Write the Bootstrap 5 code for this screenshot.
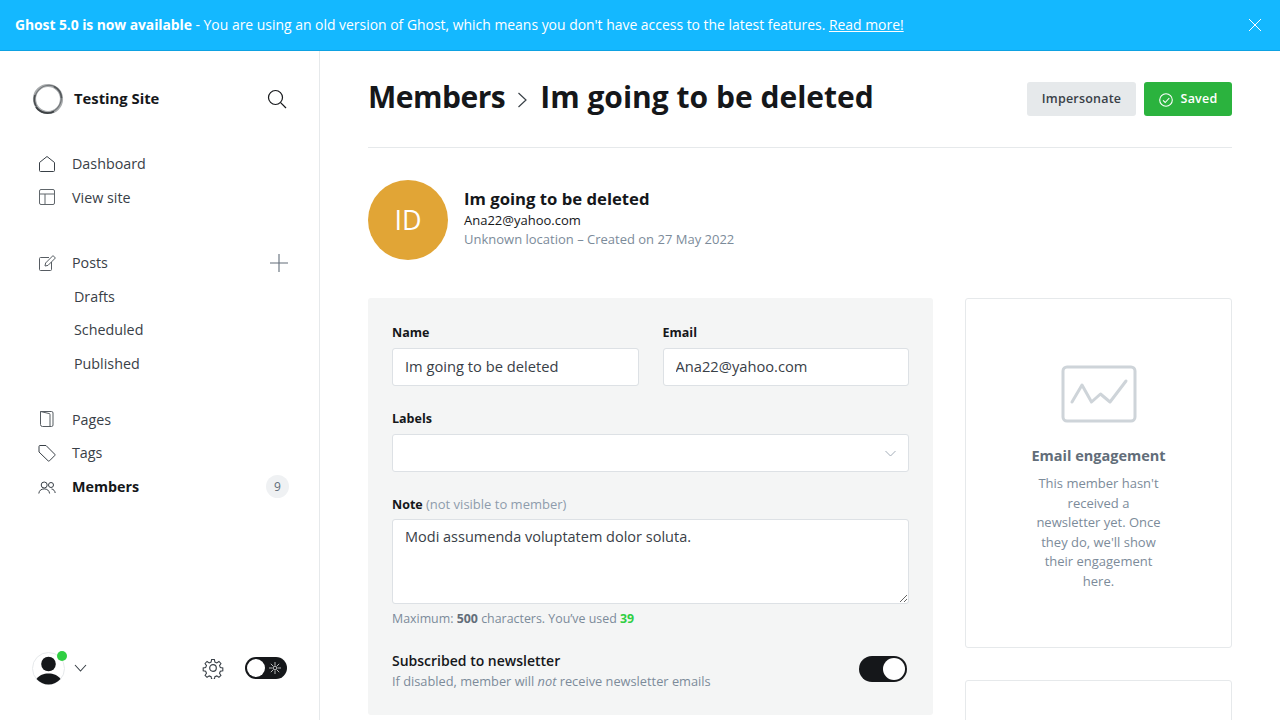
<!DOCTYPE html>
<html lang="en">
<head>
  <meta charset="UTF-8" />
  <title>Members - Testing Site</title>
  <link href="https://cdn.jsdelivr.net/npm/bootstrap@5.3.0/dist/css/bootstrap.min.css" rel="stylesheet">
  <style>
    html, body { height: 100%; overflow: hidden; }
    body { font-family: "Open Sans", "Noto Sans", sans-serif; color: #15171a; font-size: 14px; }
    svg { display: block; flex: none; }

    .update-bar { height: 51px; background: #14b8ff; border-bottom: 1px solid #0ea2e2; color: #fff; padding: 0 18px 0 15px; font-size: 13.93px; }
    .update-bar strong { letter-spacing: -.08px; }
    .update-bar a { color: #fff; }
    .shell { height: 669px; }

    .side-col { width: 320px; flex: none; border-right: 1px solid #e6e9eb; padding: 32px 30px 0 32px; }
    .brand-row { height: 32px; margin-bottom: 32px; }
    .brand-name { font-weight: 700; font-size: 14.8px; margin-left: 10px; padding-bottom: 2px; }
    .menu-list { list-style: none; margin: 0 0 32px; padding: 0; }
    .menu-list.menu-posts { margin-bottom: 22px; }
    .menu-item { height: 33.6px; color: #394047; font-size: 14.3px; padding-left: 6px; }
    .menu-item svg.ico { margin-right: 16px; color: #394047; }
    .menu-sub { padding-left: 42px; }
    .menu-on { color: #15171a; font-weight: 700; }
    .count-pill { width: 23px; height: 23px; border-radius: 50%; background: #eff1f3; color: #626d79; font-size: 12px; }
    .search-ico { margin-right: 2px; }
    .plus-ico { margin-right: 1px; }
    .side-foot { margin-top: auto; height: 34px; margin-bottom: 35px; padding-right: 2px; }
    .avatar-wrap { width: 34px; height: 34px; position: relative; }
    .online-dot { position: absolute; top: 0; right: -1px; width: 10px; height: 10px; border-radius: 50%; background: #30cf43; }
    .night-toggle { width: 42px; height: 22px; border-radius: 11px; background: #15171a; padding: 2px; margin-left: 21px; }
    .night-knob { width: 18px; height: 18px; border-radius: 50%; background: #fff; }

    .main-col { padding: 30px 48px 0; min-width: 0; overflow: hidden; }
    .head-row { height: 67px; border-bottom: 1px solid #e6e9eb; margin-bottom: 32px; align-items: flex-start; }
    .page-title { font-size: 30px; font-weight: 700; line-height: 32px; margin: 0; color: #15171a; }
    .title-first { letter-spacing: -.5px; }
    .title-chev { margin: 6px 11px 0 12px; }
    .head-btns { margin-top: 1px; }
    .btn-ghostish { height: 34px; width: 109px; padding: 1px 0 0; background: #e6e9eb; color: #394047; font-size: 12.5px; font-weight: 600; letter-spacing: .2px; border: 0; border-radius: 3px; }
    .btn-saved { height: 34px; width: 88px; padding: 1px 0 0; background: #2bb33e; color: #fff; font-size: 12.5px; font-weight: 600; letter-spacing: .2px; border: 0; border-radius: 3px; }
    .member-pic { width: 80px; height: 80px; border-radius: 50%; background: #e1a536; color: #fff; font-size: 27px; margin-right: 16px; }
    .member-info { margin-top: -3px; }
    .member-name { font-size: 16.7px; font-weight: 700; line-height: 21px; margin-bottom: 2px; }
    .member-mail { font-size: 13px; line-height: 19px; color: #15171a; }
    .member-meta { font-size: 13px; line-height: 19px; color: #7c8b9a; }

    .body-row { margin-top: 38px; gap: 32px; }
    .form-panel { width: 565px; flex: none; height: 417px; background: #f4f5f5; border-radius: 3px; padding: 26px 24px 0; }
    .fld-label { font-size: 12.5px; font-weight: 700; color: #15171a; line-height: 18px; margin-bottom: 6px; display: block; }
    .fld-label.note-label { margin-bottom: 5px; }
    .fld-hint { font-weight: 400; color: #8e9cac; font-size: 13px; }
    .fld-gap { margin-bottom: 23px; }
    .fld-gap-top { margin-bottom: 24px; }
    .form-control.fld-input, .form-select.fld-input { height: 38px; font-size: 14.7px; color: #394047; border: 1px solid #dde1e5; border-radius: 3px; padding: 0 12px 3px; box-shadow: none; }
    .form-select.fld-input { background-image: url("data:image/svg+xml,%3csvg xmlns='http://www.w3.org/2000/svg' viewBox='0 0 11 7'%3e%3cpath fill='none' stroke='%23a3adb8' d='M.5 1l5 5 5-5'/%3e%3c/svg%3e"); background-size: 11px 7px; background-position: right 12px center; }
    .form-control.fld-area { height: 85px; font-size: 14.5px; color: #394047; border: 1px solid #dde1e5; border-radius: 3px; padding: 6px 12px; line-height: 22px; }
    .fld-note { font-size: 12.4px; color: #7c8b9a; margin-top: 6px; line-height: 18px; }
    .fld-note b { color: #626d79; }
    .fld-note .used { color: #30cf43; }
    .news-row { margin-top: 23px; }
    .news-title { font-size: 14px; font-weight: 600; line-height: 20px; }
    .news-sub { font-size: 12.8px; color: #7c8b9a; line-height: 20px; }
    .news-toggle { width: 48px; height: 26px; border-radius: 13px; background: #15171a; padding: 2px; margin: 0 2px 5px 0; }
    .news-knob { width: 22px; height: 22px; border-radius: 50%; background: #fff; }

    .stat-col { width: 267px; flex: none; }
    .card.engage-box { height: 350px; border: 1px solid #e6e9eb; border-radius: 3px; padding-top: 66px; }
    .engage-title { font-size: 14.5px; font-weight: 700; color: #626d79; margin-top: 23px; line-height: 20px; }
    .engage-text { font-size: 13px; color: #7c8b9a; line-height: 19.6px; margin-top: 8px; }
    .card.next-box { height: 100px; border: 1px solid #e6e9eb; border-radius: 3px; margin-top: 32px; }
  </style>
</head>
<body>

  <!-- Update banner -->
  <div class="update-bar d-flex align-items-center justify-content-between">
    <div><strong>Ghost 5.0 is now available</strong> - You are using an old version of Ghost, which means you don't have access to the latest features. <a href="#">Read more!</a></div>
    <svg width="14" height="14" viewBox="0 0 14 14" stroke="#fff" stroke-width="1"><path d="M1 1l12 12M13 1L1 13"/></svg>
  </div>

  <div class="shell d-flex">
    <!-- Sidebar -->
    <aside class="side-col d-flex flex-column">
      <div class="brand-row d-flex align-items-center">
        <svg width="32" height="32" viewBox="0 0 32 32" fill="none">
          <circle cx="16" cy="16" r="13.500" stroke="#a9acae" stroke-width="3.200"/>
          <ellipse cx="16" cy="16" rx="13" ry="14" stroke="#6d7174" stroke-width="1" transform="rotate(35 16 16)"/>
          <path d="M4 24A14 14 0 0 0 22 28.500" stroke="#3d4144" stroke-width="1.800"/>
          <path d="M3 12A14 14 0 0 0 4 23" stroke="#4a4e51" stroke-width="1.500"/>
          <path d="M22 3.500A14 14 0 0 1 29.500 15" stroke="#55595c" stroke-width="1.600"/>
        </svg>
        <span class="brand-name">Testing Site</span>
        <svg class="ms-auto search-ico" width="20" height="20" viewBox="0 0 20 20" fill="none" stroke="#15171a" stroke-width="1.200"><circle cx="8.500" cy="8.500" r="7"/><path d="M13.600 13.600L19 19"/></svg>
      </div>

      <ul class="menu-list">
        <li class="menu-item d-flex align-items-center">
          <svg class="ico" width="18" height="18" viewBox="0 0 18 18" fill="none" stroke="currentColor"><path d="M1.500 7.500L9 1.500l7.500 6v8a1 1 0 0 1-1 1h-13a1 1 0 0 1-1-1z"/></svg>Dashboard
        </li>
        <li class="menu-item d-flex align-items-center">
          <svg class="ico" width="18" height="18" viewBox="0 0 18 18" fill="none" stroke="currentColor" opacity=".8"><rect x="1.500" y="1.500" width="15" height="15" rx="1.500"/><path d="M1.500 6h15M7 6v10.500"/></svg>View site
        </li>
      </ul>

      <ul class="menu-list menu-posts">
        <li class="menu-item d-flex align-items-center">
          <svg class="ico" width="18" height="18" viewBox="0 0 18 18" fill="none" stroke="currentColor" opacity=".85"><path d="M11 3.500H2.500a1 1 0 0 0-1 1v11a1 1 0 0 0 1 1h10a1 1 0 0 0 1-1V8"/><path d="M7 12l.6-3 7.400-7.400 2.400 2.400L10 11.400z"/></svg>Posts
          <svg class="ms-auto plus-ico" width="18" height="18" viewBox="0 0 18 18" stroke="#626d79" stroke-width="1.100"><path d="M9 0v18M0 9h18"/></svg>
        </li>
        <li class="menu-item menu-sub d-flex align-items-center">Drafts</li>
        <li class="menu-item menu-sub d-flex align-items-center">Scheduled</li>
        <li class="menu-item menu-sub d-flex align-items-center">Published</li>
      </ul>

      <ul class="menu-list">
        <li class="menu-item d-flex align-items-center">
          <svg class="ico" width="18" height="18" viewBox="0 0 18 18" fill="none" stroke="currentColor" opacity=".85"><path d="M2.500 1.500h11a1.500 1.500 0 0 1 1.500 1.500v12a1.500 1.500 0 0 1-1.500 1.500h-9a2 2 0 0 1-2-2z"/><path d="M2.500 1.500l8.500 2a1 1 0 0 1 1 1v12"/></svg>Pages
        </li>
        <li class="menu-item d-flex align-items-center">
          <svg class="ico" width="18" height="18" viewBox="0 0 18 18" fill="none" stroke="currentColor"><path d="M1 2.500a1 1 0 0 1 1-1h6l8.700 8.700a1 1 0 0 1 0 1.400l-5.200 5.200a1 1 0 0 1-1.400 0L1 8z"/></svg>Tags
        </li>
        <li class="menu-item menu-on d-flex align-items-center">
          <svg class="ico" width="18" height="18" viewBox="0 0 18 18" fill="none" stroke="currentColor"><circle cx="6.200" cy="7" r="3"/><path d="M.8 15.500c.3-3 2.500-4.600 5.400-4.600s5 1.600 5.400 4.600"/><circle cx="13" cy="7" r="2.500"/><path d="M13.500 11c2 .2 3.400 1.800 3.700 4"/></svg>Members
          <span class="count-pill ms-auto d-flex align-items-center justify-content-center fw-normal">9</span>
        </li>
      </ul>

      <div class="side-foot d-flex align-items-center">
        <div class="avatar-wrap">
          <svg width="34" height="34" viewBox="0 0 34 34">
            <circle cx="16.500" cy="17.500" r="16" fill="#fff" stroke="#e6e9eb"/>
            <circle cx="16.500" cy="13" r="7.300" fill="#15171a"/>
            <path d="M4.500 28c3-4 7-5.500 12-5.500s9 1.500 12 5.500c-3 3.500-7.500 5.500-12 5.500S7.500 31.500 4.500 28z" fill="#15171a"/>
          </svg>
          <span class="online-dot"></span>
        </div>
        <svg class="ms-2" width="13" height="8" viewBox="0 0 13 8" fill="none" stroke="#394047" stroke-width="1.100"><path d="M1 1l5.500 6L12 1"/></svg>
        <svg class="ms-auto" width="22" height="22" viewBox="0 0 24 24" fill="none" stroke="#394047" stroke-width="1.300"><circle cx="12" cy="12" r="3.600"/><path d="M10.300 1.800h3.400l.6 3 2.300 1 2.600-1.700 2.400 2.400-1.700 2.600 1 2.300 3 .6v3.400l-3 .6-1 2.300 1.700 2.600-2.400 2.400-2.600-1.700-2.300 1-.6 3h-3.400l-.6-3-2.300-1-2.600 1.700-2.400-2.400 1.700-2.600-1-2.300-3-.6v-3.400l3-.6 1-2.300-1.700-2.600 2.400-2.400 2.600 1.700 2.300-1z" transform="translate(1.200 1.200) scale(.9)"/></svg>
        <div class="night-toggle d-flex align-items-center justify-content-between">
          <span class="night-knob"></span>
          <svg class="me-1" width="12" height="12" viewBox="0 0 12 12" stroke="#fff" stroke-width=".7" fill="#fff"><circle cx="6" cy="6" r="1.800" fill="none"/><path d="M6 0v3.500M6 8.500V12M0 6h3.500M8.500 6H12M1.800 1.800l2.400 2.400M7.800 7.800l2.400 2.400M10.200 1.800L7.800 4.200M4.200 7.800l-2.400 2.400"/></svg>
        </div>
      </div>
    </aside>

    <!-- Main -->
    <main class="main-col flex-grow-1">
      <div class="head-row d-flex justify-content-between">
        <h1 class="page-title d-flex align-items-center">
          <span class="title-first">Members</span>
          <svg class="title-chev" width="12" height="18" viewBox="0 0 12 18" fill="none" stroke="#394047" stroke-width="1.200"><path d="M1.500 2l7.500 7-7.500 7"/></svg>
          <span>Im going to be deleted</span>
        </h1>
        <div class="d-flex gap-2 head-btns">
          <button class="btn btn-ghostish" type="button">Impersonate</button>
          <button class="btn btn-saved d-flex align-items-center justify-content-center" type="button">
            <svg class="me-2" width="14" height="14" viewBox="0 0 14 14" fill="none" stroke="#fff" stroke-width="1.100"><circle cx="7" cy="7" r="6.300"/><path d="M4 7.300l2.200 2.200L10.300 5"/></svg>Saved
          </button>
        </div>
      </div>

      <div class="d-flex align-items-center">
        <div class="member-pic d-flex align-items-center justify-content-center">ID</div>
        <div class="member-info">
          <div class="member-name">Im going to be deleted</div>
          <div class="member-mail">Ana22@yahoo.com</div>
          <div class="member-meta">Unknown location – Created on 27 May 2022</div>
        </div>
      </div>

      <div class="body-row d-flex align-items-start">
        <form class="form-panel">
          <div class="row gx-4 fld-gap-top">
            <div class="col-6">
              <label class="fld-label">Name</label>
              <input class="form-control fld-input" value="Im going to be deleted">
            </div>
            <div class="col-6">
              <label class="fld-label">Email</label>
              <input class="form-control fld-input" value="Ana22@yahoo.com">
            </div>
          </div>
          <div class="fld-gap">
            <label class="fld-label">Labels</label>
            <select class="form-select fld-input"></select>
          </div>
          <div>
            <label class="fld-label note-label">Note <span class="fld-hint">(not visible to member)</span></label>
            <textarea class="form-control fld-area">Modi assumenda voluptatem dolor soluta.</textarea>
            <div class="fld-note">Maximum: <b>500</b> characters. You’ve used <b class="used">39</b></div>
          </div>
          <div class="news-row d-flex align-items-center justify-content-between">
            <div>
              <div class="news-title">Subscribed to newsletter</div>
              <div class="news-sub">If disabled, member will <em>not</em> receive newsletter emails</div>
            </div>
            <div class="news-toggle d-flex justify-content-end"><span class="news-knob"></span></div>
          </div>
        </form>

        <div class="stat-col">
          <div class="card engage-box align-items-center text-center">
            <svg width="76" height="58" viewBox="0 0 76 58" fill="none" stroke="#ced4d9" stroke-width="3" stroke-linecap="round" stroke-linejoin="round"><rect x="2" y="2" width="72" height="54" rx="4"/><path d="M11 37l10-17 9.500 17 9-8 9.500 8 16-21"/></svg>
            <div class="engage-title">Email engagement</div>
            <div class="engage-text">This member hasn't<br>received a<br>newsletter yet. Once<br>they do, we'll show<br>their engagement<br>here.</div>
          </div>
          <div class="card next-box"></div>
        </div>
      </div>
    </main>
  </div>

  <script src="https://cdn.jsdelivr.net/npm/bootstrap@5.3.0/dist/js/bootstrap.bundle.min.js"></script>
</body>
</html>
